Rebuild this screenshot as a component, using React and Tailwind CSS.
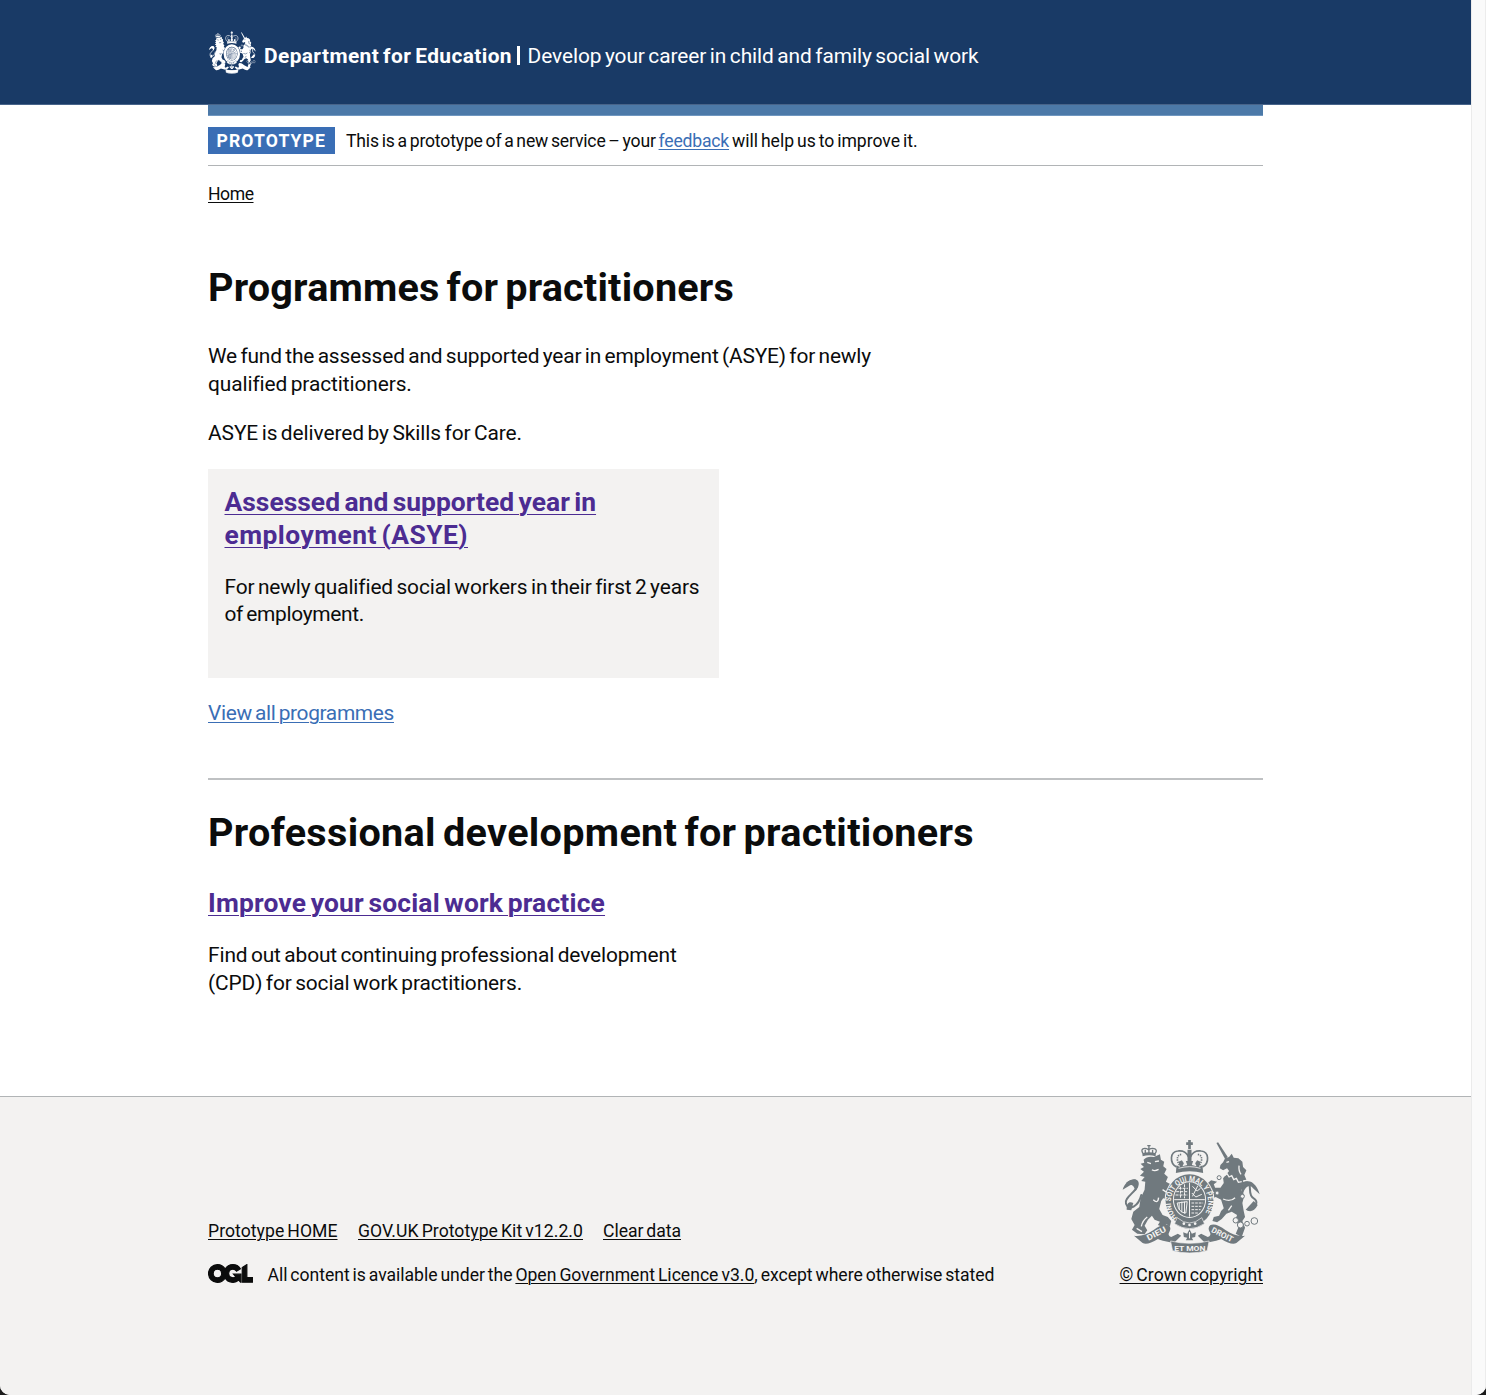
import React from "react";

function Crest({ fg, bg, mottos = false, className }) {
  return (
    <svg viewBox="30 28 430 345" preserveAspectRatio="none" className={className} fill={fg} aria-hidden="true">
      {/* tails */}
      <g fill="none" stroke={fg} strokeWidth="6" strokeLinecap="round">
        <path d="M94 196C86 230 56 246 48 222C42 204 74 190 82 170C88 150 72 146 52 160" />
        <path d="M394 214C404 178 390 160 408 158C432 158 410 196 432 206C446 214 442 236 416 240" />
      </g>
      <path d="M38 180C44 158 62 146 78 150C90 158 84 178 76 184C74 172 66 162 58 168Z" />
      <path d="M450 194C444 172 428 150 408 156C396 162 398 180 400 190C408 170 420 162 430 176Z" />
      <path d="M50 240C50 222 56 214 70 220L64 242Z" />
      <path d="M444 226C434 246 420 248 408 240L432 214Z" />
      {/* lion */}
      <path d="M98 80L97 71Q117 64 138 71L137 80Q118 73 98 80Z" />
      <path d="M99 71C90 58 102 52 116 60C130 52 146 58 136 71M117 70V46M112 48H122M106 70V60M128 70V60" fill="none" stroke={fg} strokeWidth="4" />
      <path d="M101 90Q112 78 132 82L150 74L153 90L163 96L160 110L170 118L163 132L174 142L168 156L182 164L190 178L184 190L194 200L186 222L176 210L160 206L154 214L148 238L158 256L174 262L184 274L180 290L170 284L158 292L144 286L150 276L134 270L126 258L114 270L104 288L112 302L104 314L82 312L66 300L74 286L64 268L70 246L88 232L92 206L104 180L106 156L94 154L104 142L90 138L102 126L91 118L102 112L92 102L103 99Z" />
      <g fill="none" stroke={bg} strokeWidth="4">
        <path d="M112 98L123 102M135 96L147 94M126 120Q134 126 146 119M158 180L176 192M130 210Q144 224 146 204M112 262Q98 272 94 290M80 296L96 306" />
      </g>
      {/* unicorn */}
      <path d="M320 40L325 38L354 82L346 88Z" />
      <path d="M346 86L358 82L366 72L372 84L386 86L398 96L400 112L410 122L404 136L410 150L400 152L402 170L394 182L404 196L398 220L402 244L406 262L398 274L406 294L396 322L378 312L388 288L376 272L382 256L366 246L350 252L336 268L322 278L308 274L312 262L328 258L334 244L342 236L334 210L318 202L304 208L300 196L314 188L296 178L290 164L304 152L322 156L312 164L316 174L332 174L342 160L340 146L358 124L352 116L340 122L330 116L332 106L340 98Z" />
      <g fill="none" stroke={bg} strokeWidth="4">
        <path d="M344 138L352 132L358 142L366 138L372 150L380 146L386 158L396 156M350 98L358 96M388 108Q386 124 394 134M340 208Q362 218 376 204M356 242L366 228" />
      </g>
      <g fill={bg} stroke={fg} strokeWidth="3">
        <circle cx="328" cy="144" r="6" /><circle cx="322" cy="190" r="6" /><circle cx="398" cy="200" r="6" />
        <circle cx="378" cy="272" r="8" /><circle cx="392" cy="286" r="9" /><circle cx="412" cy="282" r="7" /><circle cx="434" cy="274" r="10" />
      </g>
      {/* crown */}
      <path d="M235 31H243V38H249V46H243V58H235V46H229V38H235Z" />
      <g fill="none" stroke={fg} strokeWidth="5">
        <path d="M200 112C178 100 180 66 204 64C220 62 232 70 236 82M278 112C300 100 298 66 274 64C258 62 246 70 242 82" />
      </g>
      <g fill="none" stroke={fg} strokeWidth="5" strokeDasharray="4 3">
        <path d="M209 106C198 90 202 76 214 74M269 106C280 90 276 76 264 74" />
      </g>
      <path d="M233 60H245V100H233ZM198 130L200 107L210 112L206 96L216 92L222 101L218 110L232 106L228 94H250L246 106L260 110L256 101L262 92L272 96L268 112L278 107L280 130Q239 120 198 130Z" />
      <path d="M206 116Q239 106 272 116" fill="none" stroke={bg} strokeWidth="2.5" />
      {/* garter and shield */}
      <ellipse cx="239" cy="212" rx="75" ry="81" fill={bg} />
      <ellipse cx="239" cy="212" rx="72" ry="78" />
      <ellipse cx="239" cy="210" rx="50" ry="55" fill={bg} />
      <ellipse cx="239" cy="210" rx="47" ry="52" />
      <path d="M239 159V261M193 210H285" stroke={bg} strokeWidth="3" />
      <g fill="none" stroke={bg} strokeWidth="3">
        <path d="M206 176H234M199 186H234M197 196H234M212 171V206M224 164V206" strokeDasharray="9 3" />
        <path d="M248 170L262 184L272 176M246 190L258 202L276 194M264 168L248 200" />
        <path d="M208 220V240M216 216V248M224 216V252M202 220Q206 250 228 250L232 216Z" />
        <path d="M245 220H280M245 230H276M245 240H272M245 250H264" strokeDasharray="8 3" />
      </g>
      <path d="M202 264Q239 296 276 264L284 282Q239 312 194 282Z" stroke={bg} strokeWidth="2" />
      <g fill={bg}><circle cx="222" cy="282" r="4" /><circle cx="239" cy="286" r="4" /><circle cx="256" cy="282" r="4" /></g>
      {/* scroll */}
      <path d="M72 318Q100 322 130 302Q158 280 176 286Q186 294 178 308Q172 318 184 322L204 312L214 318L192 340Q150 332 144 328Q112 348 98 340Z" />
      <path d="M406 318Q378 322 348 302Q320 280 302 286Q292 294 300 308Q306 318 294 322L274 312L264 318L286 340Q328 332 334 328Q366 348 380 340Z" />
      <path d="M182 334Q239 348 298 334L292 363Q239 377 188 363Z" stroke={bg} strokeWidth="2" />
      <path d="M239 299L246 312L258 308L256 322L246 324L250 332H228L232 324L222 322L220 308L232 312Z" />
      <path d="M239 307V326" stroke={bg} strokeWidth="3" />
      {mottos && (
        <g fill={bg} fontFamily="Roboto, sans-serif" fontWeight="700">
          <path id="garter" d="M202 264A56 62 0 1 1 276 264" fill="none" />
          <text fontSize="24" textLength="270" lengthAdjust="spacingAndGlyphs"><textPath href="#garter">HONI SOIT QUI MAL Y PENSE</textPath></text>
          <text x="116" y="333" fontSize="24" transform="rotate(-28 116 333)" textLength="62" lengthAdjust="spacingAndGlyphs">DIEU</text>
          <text x="303" y="306" fontSize="24" transform="rotate(27 303 306)" textLength="70" lengthAdjust="spacingAndGlyphs">DROIT</text>
          <text x="193" y="364" fontSize="24" textLength="94" lengthAdjust="spacingAndGlyphs">ET MON</text>
        </g>
      )}
    </svg>
  );
}

function OglLogo() {
  return (
    <svg viewBox="-6 -6 495.2 207.7" className="mr-[14.5px] h-[19px] w-[45px] shrink-0" fill="#0b0c0c" stroke="#0b0c0c" strokeWidth="13" aria-hidden="true">
      <path d="M421.5 142.8V.1l-50.7 32.3v161.1h112.4v-50.7zm-122.3-9.6A47.12 47.12 0 0 1 221 97.8c0-26 21.1-47.1 47.1-47.1 16.7 0 31.4 8.7 39.7 21.8l42.7-27.2A97.63 97.63 0 0 0 268.1 0c-36.5 0-68.3 20.1-85.1 49.7A98 98 0 0 0 97.8 0C43.9 0 0 43.9 0 97.8s43.9 97.8 97.8 97.8c36.5 0 68.3-20.1 85.1-49.7a97.76 97.76 0 0 0 149.6 25.4l19.4 22.2h3v-87.8h-80l24.3 27.5zM97.8 145c-26 0-47.1-21.1-47.1-47.1s21.1-47.1 47.1-47.1 47.1 21.1 47.1 47.1S123.8 145 97.8 145" />
    </svg>
  );
}

const link = "underline decoration-1 underline-offset-2";
const body = "text-[20.9px] leading-[27.5px] [word-spacing:-1.6px]";
const small = "text-[17.6px] leading-[22px] [word-spacing:-1.4px]";
const heading = "text-[39.6px] font-bold leading-[44px] [word-spacing:-3px]";
const cardTitle = "text-[26.4px] font-bold leading-[33px] [word-spacing:-2.2px] text-[#4c2c92]";
const cardLink = "block w-fit underline decoration-1 underline-offset-[3px]";

export default function App() {
  return (
    <div className="h-[1395px] bg-[#1c1c1c] font-[Roboto,sans-serif] text-[#0b0c0c] whitespace-nowrap">
      <div className="flex h-full overflow-hidden rounded-b-[10px] bg-white">
        <div className="flex w-[1471px] flex-col">
          <header className="h-[105px] border-b border-[#48648a] bg-[#193a66] text-white">
            <div className="mx-auto flex w-[1055px] items-start pt-[31px]">
              <Crest fg="#ffffff" bg="#193a66" className="h-[43px] w-[49px]" />
              <div className={`${body} ml-[7px] flex pt-[12px]`}>
                <span className="w-[248px] font-bold tracking-[0.396px]">Department for Education</span>
                <span className="ml-[5px] h-[19px] w-[3px] translate-y-[3px] bg-white" />
                <span className="ml-[7.5px] tracking-[-0.076px]">Develop your career in child and family social work</span>
              </div>
            </div>
          </header>

          <div className="mx-auto w-[1055px]">
            <div className="h-[11px] border-b border-[#7097c0] bg-[#4c79a8]" />
            <div className="flex h-[50px] items-start border-b border-[#b1b4b6] pt-[11px]">
              <strong className={`${small} mr-[11px] flex h-[27px] w-[127px] items-center bg-[#3a6eb5] pl-[8.5px] font-bold tracking-[1.1px] text-white`}>
                PROTOTYPE
              </strong>
              <p className={`${small} pt-[3px]`}>
                <span className="tracking-[-0.17px]">This is a prototype of a new service – your </span>
                <a className={`${link} tracking-[-0.196px] text-[#3a6eb5]`}>feedback</a>
                <span className="tracking-[-0.02px]"> will help us to improve it.</span>
              </p>
            </div>
            <nav className={`${small} mt-[17px]`}>
              <a className={`${link} tracking-[-0.46px]`}>Home</a>
            </nav>

            <main>
              <h1 className={`${heading} mt-[61px] tracking-[0.19px]`}>Programmes for practitioners</h1>
              <p className={`${body} mt-[33px]`}>
                <span className="block tracking-[-0.16px]">We fund the assessed and supported year in employment (ASYE) for newly</span>
                <span className="block tracking-[-0.1px]">qualified practitioners.</span>
              </p>
              <p className={`${body} mt-[22px] tracking-[-0.076px]`}>ASYE is delivered by Skills for Care.</p>
              <section className="mt-[21px] h-[209px] w-[511px] bg-[#f3f2f1] px-[16.5px] pt-[17px]">
                <h2 className={cardTitle}>
                  <span className={`${cardLink} tracking-[0.027px]`}>Assessed and supported year in</span>
                  <span className={`${cardLink} tracking-[0.453px]`}>employment (ASYE)</span>
                </h2>
                <p className={`${body} mt-[22px]`}>
                  <span className="block tracking-[-0.125px]">For newly qualified social workers in their first 2 years</span>
                  <span className="block tracking-[-0.31px]">of employment.</span>
                </p>
              </section>
              <p className={`${body} mt-[22px]`}>
                <a className={`${link} tracking-[-0.35px] text-[#3a6eb5]`}>View all programmes</a>
              </p>
              <hr className="mt-[51px] border-0 border-t-2 border-[#bfc1c3]" />
              <h2 className={`${heading} mt-[31px] tracking-[0.31px]`}>Professional development for practitioners</h2>
              <h3 className={`${cardTitle} mt-[32px]`}>
                <span className={`${cardLink} tracking-[0.185px]`}>Improve your social work practice</span>
              </h3>
              <p className={`${body} mt-[22px] tracking-[-0.12px]`}>
                <span className="block">Find out about continuing professional development</span>
                <span className="block">(CPD) for social work practitioners.</span>
              </p>
            </main>
          </div>

          <footer className="mt-auto h-[299px] border-t border-[#b1b4b6] bg-[#f3f2f1]">
            <div className="mx-auto flex w-[1055px] justify-between">
              <div className={`${small} pt-[123px]`}>
                <div className="flex">
                  <a className={`${link} mr-[20.5px] tracking-[0.05px]`}>Prototype HOME</a>
                  <a className={`${link} mr-[20px] tracking-[0.057px]`}>GOV.UK Prototype Kit v12.2.0</a>
                  <a className={`${link} tracking-[-0.04px]`}>Clear data</a>
                </div>
                <div className="mt-[22px] flex items-start">
                  <OglLogo />
                  <p>
                    <span className="tracking-[-0.035px]">All content is available under the </span>
                    <a className={link}>Open Government Licence v3.0</a>
                    <span className="tracking-[-0.03px]">, except where otherwise stated</span>
                  </p>
                </div>
              </div>
              <div className="flex flex-col items-end pt-[42px]">
                <Crest fg="#70797e" bg="#f3f2f1" mottos className="h-[115px] w-[143px]" />
                <a className={`${small} ${link} mt-[10px] tracking-[0.035px]`}>© Crown copyright</a>
              </div>
            </div>
          </footer>
        </div>
        <div className="w-[15px] border-x border-l-[#ebebeb] border-r-[#ececec] bg-[#fafafa]" />
      </div>
    </div>
  );
}
